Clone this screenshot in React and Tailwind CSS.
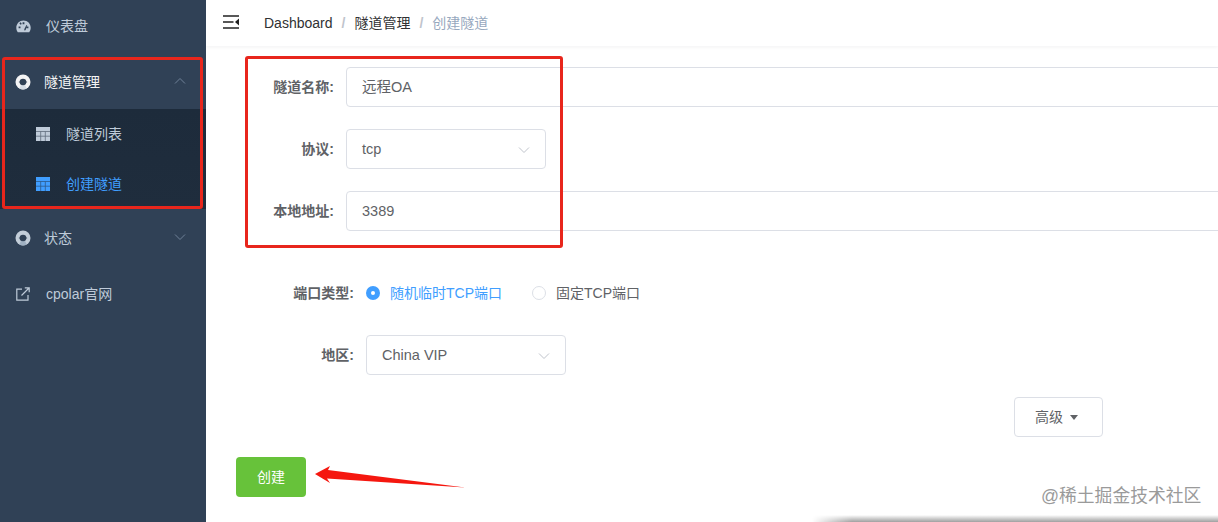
import React from 'react';

const FONT = 'font-["Liberation_Sans","Noto_Sans_CJK_SC",sans-serif]';

const Chevron = ({ up, className = '' }) => (
  <svg width="12" height="8" viewBox="0 0 12 8" fill="none" stroke="currentColor" strokeWidth="1" className={className}>
    <path d={up ? 'M1 6.5 L6 1.5 L11 6.5' : 'M1 1.5 L6 6.5 L11 1.5'} />
  </svg>
);

const Gauge = () => (
  <svg width="15" height="13" viewBox="0 0 15 13">
    <path fill="#bfcbd9" fillRule="evenodd" d="M7.5 0.5C3.4 0.5 0.3 3.7 0.3 7.7c0 1.7 0.6 3.3 1.5 4.6h11.4c0.9-1.3 1.5-2.9 1.5-4.6C14.7 3.7 11.6 0.5 7.5 0.5zM6.6 2.2h1.8v2H6.6zM2.6 6.6h1.9v1.7H2.6zM10.5 6.6h1.9v1.7h-1.9zM3.4 3.2l1.3-0.9 1.1 1.6-1.3 0.9zM8.4 10.2c-0.3-0.5-0.1-1 0.1-1.4l1.9-3.7 0.8 0.4-1.4 3.9c-0.2 0.5-0.5 1-1 1.1-0.2 0-0.3-0.1-0.4-0.3z" />
  </svg>
);

const Lifebuoy = ({ color, accent }) => (
  <svg width="16" height="16" viewBox="0 0 16 16">
    <circle cx="8" cy="8" r="7.5" fill={color} />
    <path d="M4.2 14.5 A7.5 7.5 0 0 0 11.8 14.5 L9.8 10.6 A3 3 0 0 1 6.2 10.6 Z" fill={accent} />
    <circle cx="8" cy="8" r="3.3" fill="#304156" />
    <path d="M3.9 8 H12.1" stroke="#304156" strokeWidth="0.8" />
  </svg>
);

const TableIcon = ({ color }) => (
  <svg width="14" height="14" viewBox="0 0 14 14">
    <rect width="14" height="14" fill={color} />
    <path d="M0 4.5 H14 M0 9.2 H14 M4.7 4.5 V14 M9.3 4.5 V14" stroke="#1f2d3d" strokeWidth="0.8" opacity="0.6" />
  </svg>
);

const External = () => (
  <svg width="14" height="14" viewBox="0 0 14 14" fill="none" stroke="#bfcbd9" strokeWidth="1.2">
    <path d="M6 2.2 H0.8 V13.2 H12 V8" />
    <path d="M5.5 8.5 L13 1 M8.8 0.8 H13.2 V5.2" />
  </svg>
);

const MenuItem = ({ icon, label, chevron, active, iconGap = 'gap-[13px]' }) => (
  <div className={`flex items-center h-[56px] pl-[15px] pr-[20px] ${iconGap}`}>
    <span className="w-[16px] flex justify-center">{icon}</span>
    <span className={`text-[14px] flex-1 ${active ? 'text-[#f4f4f5]' : 'text-[#bfcbd9]'}`}>{label}</span>
    {chevron && <Chevron up={chevron === 'up'} className="text-[#6f8198] -mt-[3px]" />}
  </div>
);

const SubItem = ({ label, active }) => (
  <div className="flex items-center gap-[16px] h-[50px] pl-[36px]">
    <TableIcon color={active ? '#409eff' : '#bfcbd9'} />
    <span className={`text-[14px] ${active ? 'text-[#409eff]' : 'text-[#bfcbd9]'}`}>{label}</span>
  </div>
);

const Field = ({ label, labelWidth, children }) => (
  <div className="flex items-center h-[40px] shrink-0">
    <label className={`${labelWidth} shrink-0 text-right text-[14px] font-bold text-[#606266] pr-[12px]`}>{label}:</label>
    {children}
  </div>
);

const Box = ({ className = '', children }) => (
  <div className={`h-[40px] border border-[#dcdfe6] rounded-[4px] bg-white flex items-center px-[15px] pt-[2px] text-[14.5px] text-[#606266] ${className}`}>
    {children}
  </div>
);

const Select = ({ value }) => (
  <Box className="w-[200px] justify-between">
    <span>{value}</span>
    <Chevron className="text-[#c0c4cc]" />
  </Box>
);

export default function App() {
  return (
    <div className={`relative flex w-[1218px] h-[522px] overflow-hidden bg-white ${FONT}`}>
      {/* Sidebar */}
      <aside className="w-[206px] shrink-0 bg-[#304156] -mt-[2px]">
        <MenuItem icon={<Gauge />} label="仪表盘" iconGap="gap-[15px]" />
        <div className="h-[55px]">
          <MenuItem icon={<Lifebuoy color="#f4f4f5" accent="#d5dde6" />} label="隧道管理" chevron="up" active />
        </div>
        <div className="bg-gradient-to-b from-[#1d2b3b] to-[#1f2d3d]">
          <SubItem label="隧道列表" />
          <SubItem label="创建隧道" active />
        </div>
        <div className="pt-[1px]">
          <MenuItem icon={<Lifebuoy color="#c3ced9" accent="#9fb0c2" />} label="状态" chevron="down" />
        </div>
        <MenuItem icon={<External />} label="cpolar官网" iconGap="gap-[15px]" />
      </aside>

      {/* Main */}
      <main className="flex-1 min-w-0 flex flex-col overflow-hidden">
        <header className="h-[46px] shrink-0 flex items-center pl-[17px] shadow-[0_1px_4px_rgba(0,21,41,0.06)]">
          <svg width="16" height="14" viewBox="0 0 16 14" className="mr-[25px] -mt-[3px]">
            <path d="M0 1h16M0 7h10.5M0 13h16" stroke="#222" strokeWidth="1.6" />
            <path d="M16 3.5v7l-4-3.5z" fill="#222" />
          </svg>
          <span className="text-[14px] text-[#303133]">Dashboard</span>
          <span className="mx-[9px] text-[14px] text-[#c0c4cc] font-bold">/</span>
          <span className="text-[14px] text-[#303133]">隧道管理</span>
          <span className="mx-[9px] text-[14px] text-[#c0c4cc] font-bold">/</span>
          <span className="text-[14px] text-[#97a8be]">创建隧道</span>
        </header>

        <form className="flex flex-col pt-[21px]">
          <div className="flex flex-col gap-[22px]">
            <Field label="隧道名称" labelWidth="w-[140px]">
              <Box className="w-[900px] shrink-0">远程OA</Box>
            </Field>
            <Field label="协议" labelWidth="w-[140px]">
              <Select value="tcp" />
            </Field>
            <Field label="本地地址" labelWidth="w-[140px]">
              <Box className="w-[900px] shrink-0">3389</Box>
            </Field>
          </div>

          <div className="mt-[42px] flex flex-col gap-[22px]">
            <Field label="端口类型" labelWidth="w-[160px]">
              <div className="flex items-center text-[14px]">
                <span className="w-[14px] h-[14px] rounded-full bg-[#409eff] flex items-center justify-center">
                  <span className="w-[4px] h-[4px] rounded-full bg-white" />
                </span>
                <span className="ml-[10px] text-[#409eff]">随机临时TCP端口</span>
                <span className="ml-[30px] w-[14px] h-[14px] rounded-full border border-[#dcdfe6] bg-white" />
                <span className="ml-[10px] text-[#606266]">固定TCP端口</span>
              </div>
            </Field>
            <Field label="地区" labelWidth="w-[160px]">
              <Select value="China VIP" />
            </Field>
          </div>

          <div className="mt-[22px] pl-[808px]">
            <button type="button" className="w-[89px] h-[40px] border border-[#dcdfe6] rounded-[4px] bg-white flex items-center justify-center gap-[7px] pr-[4px] text-[14px] text-[#606266]">
              高级
              <span className="w-0 h-0 border-x-[4.5px] border-x-transparent border-t-[5px] border-t-[#606266]" />
            </button>
          </div>

          <div className="mt-[20px] pl-[30px]">
            <button type="button" className="w-[70px] h-[40px] rounded-[4px] bg-[#67c23a] text-white text-[14px]">创建</button>
          </div>
        </form>
      </main>

      {/* Annotations drawn over the screenshot */}
      <div className="absolute left-[2px] top-[57px] w-[201px] h-[152px] border-[3px] border-[#e8261c] rounded-[3px]" />
      <div className="absolute left-[245px] top-[56px] w-[318px] h-[192px] border-[3px] border-[#e8261c] rounded-[3px]" />
      <svg className="absolute left-[312px] top-[460px]" width="156" height="32" viewBox="0 0 156 32">
        <path d="M3 14 L18 6 L16 10 L153 27.5 L15 18.5 L18 23 Z" fill="#f5170f" />
      </svg>
      <div className="absolute left-[1041px] top-[485px] text-[17.8px] leading-[22px] text-[#9a9a9a] whitespace-nowrap">@稀土掘金技术社区</div>
      <div className="absolute left-[812px] top-[515px] w-[406px] h-[7px] bg-gradient-to-b from-[#ffffff] to-[#a0a0a0] [mask-image:linear-gradient(to_right,transparent,black_40px)]" />
    </div>
  );
}
